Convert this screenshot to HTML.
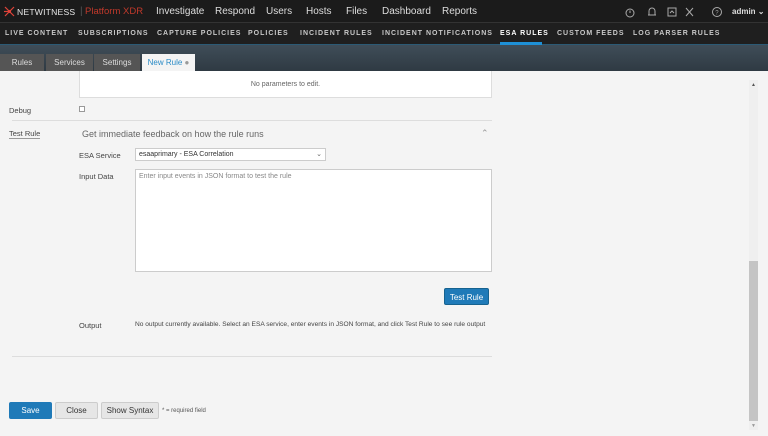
<!DOCTYPE html>
<html><head><meta charset="utf-8"><style>
*{margin:0;padding:0;box-sizing:border-box}
body{width:768px;height:436px;overflow:hidden;background:#f4f4f4;font-family:"Liberation Sans",sans-serif;position:relative;color:#444}
.abs{position:absolute}
#top{left:0;top:0;width:768px;height:23px;background:#1b1b1b;border-bottom:1px solid #333}
#top .m{position:absolute;top:6px;color:#ddd;font-size:10px;white-space:nowrap}
#nav{left:0;top:23px;width:768px;height:22px;background:#1f1f1f;border-bottom:1px solid #2b5a75}
#nav span{position:absolute;top:7px;color:#c8c8c8;font-size:7px;letter-spacing:1px;font-weight:bold;white-space:nowrap}
#tabs{left:0;top:45px;width:768px;height:26px;background:linear-gradient(#3f4d58,#2f3a43)}
.tab{position:absolute;top:9px;height:17px;background:#555;color:#ddd;font-size:8px;text-align:center;line-height:17px}
.lbl{font-size:7.5px;color:#444}
.btn{position:absolute;font-size:8px;text-align:center;border-radius:2px}
</style></head><body>
<div id="top" class="abs">
<svg class="abs" style="left:3px;top:6px" width="13" height="11" viewBox="0 0 13 11"><g stroke="#e0433a" stroke-width="1.2"><line x1="2" y1="1" x2="11" y2="10"/><line x1="11" y1="1" x2="2" y2="10"/><line x1="1" y1="5.5" x2="6.5" y2="5.5"/></g><circle cx="6.5" cy="5.5" r="1.5" fill="#e0433a"/></svg>
<span class="m" style="left:17px;top:7px;font-size:8.6px;letter-spacing:.2px;color:#e6e6e6">NETWITNESS</span>
<span class="m" style="left:80px;color:#555">|</span>
<span class="m" style="left:85px;color:#c0392b;font-size:9.5px">Platform XDR</span>
<span class="m" style="left:156px">Investigate</span>
<span class="m" style="left:215px">Respond</span>
<span class="m" style="left:266px">Users</span>
<span class="m" style="left:306px">Hosts</span>
<span class="m" style="left:346px">Files</span>
<span class="m" style="left:382px">Dashboard</span>
<span class="m" style="left:442px">Reports</span>
<svg class="abs" style="left:625px;top:6px" width="100" height="12" viewBox="0 0 100 12" fill="none" stroke="#aaa" stroke-width="1"><circle cx="5" cy="7" r="4"/><line x1="5" y1="7" x2="5" y2="4.5"/><path d="M23 9h8M24 9V5a3 3 0 0 1 6 0v4"/><rect x="43" y="2" width="8" height="8"/><path d="M45 7l2-2 2 2"/><path d="M61 2l7 8M68 2l-7 8"/><circle cx="92" cy="6" r="4.5"/><text x="90.2" y="8.5" font-size="6" fill="#aaa" stroke="none" font-family="Liberation Sans">?</text></svg>
<span class="m" style="left:732px;font-size:8px;top:7px;font-weight:bold;color:#ddd">admin ⌄</span>
</div>
<div id="nav" class="abs">
<span style="left:5px">LIVE CONTENT</span>
<span style="left:78px">SUBSCRIPTIONS</span>
<span style="left:157px">CAPTURE POLICIES</span>
<span style="left:248px">POLICIES</span>
<span style="left:300px">INCIDENT RULES</span>
<span style="left:382px">INCIDENT NOTIFICATIONS</span>
<span style="left:500px;color:#fff">ESA RULES</span>
<div class="abs" style="left:500px;top:19px;width:42px;height:3px;background:#1e90d6"></div>
<span style="left:557px">CUSTOM FEEDS</span>
<span style="left:633px">LOG PARSER RULES</span>
</div>
<div id="tabs" class="abs">
<div class="tab" style="left:0;width:44px">Rules</div>
<div class="tab" style="left:46px;width:47px">Services</div>
<div class="tab" style="left:94px;width:46px">Settings</div>
<div class="tab" style="left:142px;width:53px;background:#f4f4f4;color:#2a8bc6">New Rule <span style="color:#999">●</span></div>
</div>
<div class="abs" style="left:79px;top:71px;width:413px;height:27px;background:#fff;border:1px solid #ddd;border-top:none;font-size:7px;text-align:center;line-height:27px;color:#666">No parameters to edit.</div>
<div class="abs lbl" style="left:9px;top:106px">Debug</div>
<div class="abs" style="left:79px;top:106px;width:6px;height:6px;border:1px solid #999;background:#fff"></div>
<div class="abs" style="left:12px;top:120px;width:480px;height:1px;background:#ddd"></div>
<div class="abs lbl" style="left:9px;top:129px;border-bottom:1px solid #999">Test Rule</div>
<div class="abs" style="left:82px;top:129px;font-size:9px;color:#666">Get immediate feedback on how the rule runs</div>
<div class="abs" style="left:481px;top:128px;font-size:9px;color:#999">⌃</div>
<div class="abs lbl" style="left:79px;top:151px">ESA Service</div>
<div class="abs" style="left:135px;top:148px;width:191px;height:13px;background:#fff;border:1px solid #ccc;font-size:7px;line-height:11px;padding-left:3px;color:#333">esaaprimary - ESA Correlation<span style="position:absolute;right:3px;color:#666">⌄</span></div>
<div class="abs lbl" style="left:79px;top:172px">Input Data</div>
<div class="abs" style="left:135px;top:169px;width:357px;height:103px;background:#fff;border:1px solid #ccc;font-size:7px;padding:3px;color:#888">Enter input events in JSON format to test the rule</div>
<div class="btn" style="left:444px;top:288px;width:45px;height:17px;background:#1f7ab8;color:#fff;line-height:17px;border:1px solid #16628f">Test Rule</div>
<div class="abs lbl" style="left:79px;top:321px">Output</div>
<div class="abs" style="left:135px;top:321px;font-size:6.6px;color:#444">No output currently available. Select an ESA service, enter events in JSON format, and click Test Rule to see rule output</div>
<div class="abs" style="left:12px;top:356px;width:480px;height:1px;background:#ddd"></div>
<div class="btn" style="left:9px;top:402px;width:43px;height:17px;background:#1f7ab8;color:#fff;line-height:17px">Save</div>
<div class="btn" style="left:55px;top:402px;width:43px;height:17px;background:#e6e6e6;border:1px solid #ccc;line-height:15px;color:#333">Close</div>
<div class="btn" style="left:101px;top:402px;width:58px;height:17px;background:#e6e6e6;border:1px solid #ccc;line-height:15px;color:#333">Show Syntax</div>
<div class="abs" style="left:162px;top:408px;font-size:6px;color:#555">* = required field</div>
<div class="abs" style="left:749px;top:80px;width:9px;height:350px;background:#efefef"></div>
<div class="abs" style="left:749px;top:261px;width:9px;height:160px;background:#c4c4c4"></div>
<div class="abs" style="left:751px;top:82px;font-size:5px;color:#555">▲</div>
<div class="abs" style="left:751px;top:423px;font-size:5px;color:#999">▼</div>
</body></html>
